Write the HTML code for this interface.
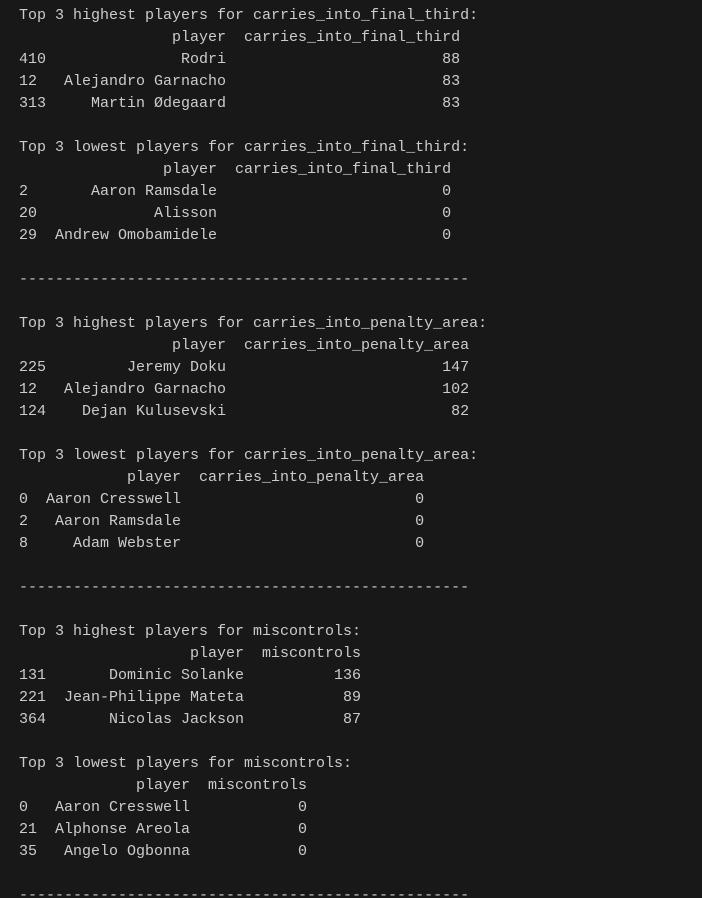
<!DOCTYPE html>
<html><head><meta charset="utf-8"><style>
html,body{margin:0;padding:0;background:#181818;width:702px;height:898px;overflow:hidden}
pre{margin:0;padding:5px 0 0 19px;font-family:"Liberation Mono",monospace;font-size:15px;line-height:22px;color:#cccccc;white-space:pre}
</style></head><body><pre>Top 3 highest players for carries_into_final_third:
                 player  carries_into_final_third
410               Rodri                        88
12   Alejandro Garnacho                        83
313     Martin Ødegaard                        83

Top 3 lowest players for carries_into_final_third:
                player  carries_into_final_third
2       Aaron Ramsdale                         0
20             Alisson                         0
29  Andrew Omobamidele                         0

--------------------------------------------------

Top 3 highest players for carries_into_penalty_area:
                 player  carries_into_penalty_area
225         Jeremy Doku                        147
12   Alejandro Garnacho                        102
124    Dejan Kulusevski                         82

Top 3 lowest players for carries_into_penalty_area:
            player  carries_into_penalty_area
0  Aaron Cresswell                          0
2   Aaron Ramsdale                          0
8     Adam Webster                          0

--------------------------------------------------

Top 3 highest players for miscontrols:
                   player  miscontrols
131       Dominic Solanke          136
221  Jean-Philippe Mateta           89
364       Nicolas Jackson           87

Top 3 lowest players for miscontrols:
             player  miscontrols
0   Aaron Cresswell            0
21  Alphonse Areola            0
35   Angelo Ogbonna            0

--------------------------------------------------
</pre></body></html>
